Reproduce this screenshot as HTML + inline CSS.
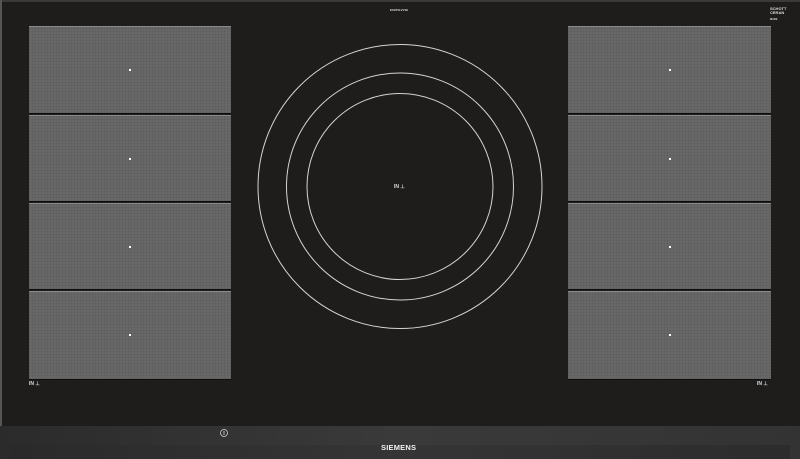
<!DOCTYPE html>
<html><head><style>
html,body{margin:0;padding:0;width:800px;height:459px;overflow:hidden;background:#1e1d1c;font-family:"Liberation Sans",sans-serif}
.b{position:absolute}
.p{position:absolute;background:#686868;background-image:repeating-linear-gradient(90deg,rgba(0,0,0,.05) 0 1px,transparent 1px 3px),repeating-linear-gradient(0deg,rgba(0,0,0,.05) 0 1px,transparent 1px 3px);border-top:1px solid #8a8a8a;border-bottom:1px solid #0e0e0e}
.d{position:absolute;width:2px;height:2px;background:#fff}
.t{position:absolute;color:#ddd;font-size:5px;font-weight:bold}
</style></head><body>
<div class="b" style="left:0;top:0;width:800px;height:2px;background:#3a3a3a"></div>
<div class="b" style="left:0;top:0;width:2px;height:459px;background:#555"></div>
<div class="b" style="left:0;top:426px;width:800px;height:33px;background:linear-gradient(90deg,#2b2b2b,#3a3a3a 50%,#333);"></div>
<div class="b" style="left:10px;top:445px;width:780px;height:14px;background:linear-gradient(90deg,#2a2a2a,#353535,#2c2c2c)"></div>

<div class="p" style="left:29px;top:26px;width:202px;height:86px"></div>
<div class="p" style="left:29px;top:115px;width:202px;height:85px"></div>
<div class="p" style="left:29px;top:203px;width:202px;height:85px"></div>
<div class="p" style="left:29px;top:291px;width:202px;height:87px"></div>
<div class="p" style="left:568px;top:26px;width:203px;height:86px"></div>
<div class="p" style="left:568px;top:115px;width:203px;height:85px"></div>
<div class="p" style="left:568px;top:203px;width:203px;height:85px"></div>
<div class="p" style="left:568px;top:291px;width:203px;height:87px"></div>
<div class="d" style="left:129px;top:69px"></div>
<div class="d" style="left:129px;top:158px"></div>
<div class="d" style="left:129px;top:246px"></div>
<div class="d" style="left:129px;top:334px"></div>
<div class="d" style="left:669px;top:69px"></div>
<div class="d" style="left:669px;top:158px"></div>
<div class="d" style="left:669px;top:246px"></div>
<div class="d" style="left:669px;top:334px"></div>

<svg class="b" style="left:0;top:0" width="800" height="459">
<g fill="none" stroke="#d4d4d4" stroke-width="1">
<circle cx="400" cy="186.5" r="142"/>
<circle cx="400" cy="186.5" r="113.5"/>
<circle cx="400" cy="186.5" r="93"/>
<circle cx="224" cy="433" r="3.5" stroke-width="0.8"/>
</g>
<line x1="224" y1="431" x2="224" y2="435" stroke="#ddd" stroke-width="0.8"/>
</svg>
<div class="t" style="left:394px;top:184px">IN ⊥</div>
<div class="t" style="left:29px;top:381px">IN ⊥</div>
<div class="t" style="left:757px;top:381px">IN ⊥</div>
<div class="t" style="left:390px;top:8px;font-size:3px">EX975LVV1E</div>
<div class="t" style="left:770px;top:7px;font-size:4px;line-height:4px">SCHOTT<br>CERAN</div>
<div class="t" style="left:770px;top:18px;font-size:2.5px">MADE</div>
<div class="b" style="left:381px;top:443px;color:#f2f2f2;font-size:7.5px;font-weight:bold;letter-spacing:.2px">SIEMENS</div>
</body></html>
